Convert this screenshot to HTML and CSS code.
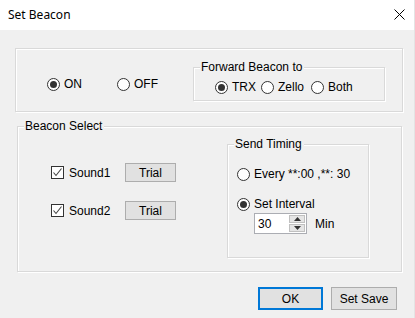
FILE: index.html
```html
<!DOCTYPE html>
<html>
<head>
<meta charset="utf-8">
<link rel="stylesheet" href="styles.css">
</head>
<body>
<div class="window">
  <div class="titlebar">
    <span class="title">Set Beacon</span>
    <svg class="close" width="11" height="11" viewBox="0 0 11 11"><path d="M0.5 0.5 L10.5 10.5 M10.5 0.5 L0.5 10.5" stroke="#000" stroke-width="1" fill="none"/></svg>
  </div>
  <div class="content">
    <div class="group g-power">
      <label class="opt opt-on"><span class="radio checked"></span>ON</label>
      <label class="opt opt-off"><span class="radio"></span>OFF</label>
      <div class="group g-forward">
        <span class="legend">Forward Beacon to</span>
        <label class="opt w-trx"><span class="radio checked"></span>TRX</label>
        <label class="opt w-zello"><span class="radio"></span>Zello</label>
        <label class="opt"><span class="radio"></span>Both</label>
      </div>
    </div>
    <div class="group g-select">
      <span class="legend">Beacon Select</span>
      <div class="sounds">
        <div class="sound-row">
          <span class="check"><svg width="11" height="11" viewBox="0 0 11 11"><path d="M1.5 5.5 L4 8.5 L9.5 1.5" stroke="#444" stroke-width="1.1" fill="none"/></svg></span>
          <span class="sound-name">Sound1</span>
          <button class="btn trial">Trial</button>
        </div>
        <div class="sound-row">
          <span class="check"><svg width="11" height="11" viewBox="0 0 11 11"><path d="M1.5 5.5 L4 8.5 L9.5 1.5" stroke="#444" stroke-width="1.1" fill="none"/></svg></span>
          <span class="sound-name">Sound2</span>
          <button class="btn trial">Trial</button>
        </div>
      </div>
      <div class="group g-timing">
        <span class="legend">Send Timing</span>
        <label class="opt"><span class="radio"></span>Every **:00 ,**: 30</label>
        <label class="opt opt-interval"><span class="radio checked"></span>Set Interval</label>
        <div class="interval-row">
          <div class="spin">
            <span class="spin-value">30</span>
            <span class="spin-btns">
              <span class="spin-btn"><svg width="7" height="4" viewBox="0 0 7 4"><path d="M0 4 L3.5 0 L7 4 Z" fill="#333"/></svg></span>
              <span class="spin-btn"><svg width="7" height="4" viewBox="0 0 7 4"><path d="M0 0 L3.5 4 L7 0 Z" fill="#333"/></svg></span>
            </span>
          </div>
          <span class="unit">Min</span>
        </div>
      </div>
    </div>
    <div class="actions">
      <button class="btn ok">OK</button>
      <button class="btn save">Set Save</button>
    </div>
  </div>
</div>
</body>
</html>
```
FILE: styles.css
```css
* { box-sizing: border-box; }
html, body { margin: 0; padding: 0; }
body {
  width: 415px;
  height: 318px;
  background: #f0f0f0;
  font-family: "Liberation Sans", Arial, sans-serif;
  font-size: 12px;
  color: #000;
  overflow: hidden;
}
.window { width: 415px; height: 318px; display: flex; flex-direction: column; border-right: 1px solid #e4e4e4; }
.titlebar {
  height: 30px;
  background: #fff;
  display: flex;
  align-items: center;
  padding: 0 9px 0 8px;
  flex: none;
}
.title { font-family: "Noto Sans", sans-serif; font-size: 12px; flex: 1; margin-top: -1px; }
.close { display: block; margin-top: -1px; }
.content { flex: 1; display: flex; flex-direction: column; }

.group {
  position: relative;
  border: 1px solid #d9d9d9;
  box-shadow: 1px 1px 0 #fff, inset 1px 1px 0 #fff;
}
.legend {
  position: absolute;
  top: -8px;
  left: 6px;
  padding: 0 2px 0 1px;
  background: #f0f0f0;
  line-height: 14px;
  white-space: nowrap;
}

.opt { display: flex; align-items: center; height: 14px; white-space: nowrap; }
.radio {
  width: 13px; height: 13px; flex: none;
  border: 1px solid #333;
  border-radius: 50%;
  background: #fff;
  margin-right: 4px;
  position: relative;
}
.radio.checked::after {
  content: "";
  position: absolute;
  left: 2px; top: 2px;
  width: 7px; height: 7px;
  border-radius: 50%;
  background: #333;
}

.g-power {
  margin: 18px 0 0 15px;
  width: 388px;
  height: 64px;
  display: flex;
  align-items: flex-start;
  padding: 28px 0 0 31px;
}
.opt-on { width: 70px; }
.g-forward {
  margin: -10px 17px 0 auto;
  width: 192px;
  height: 34px;
  display: flex;
  align-items: flex-start;
  padding: 12px 0 0 21px;
}
.w-trx { width: 46px; }
.w-zello { width: 50px; }

.g-select {
  margin: 14px 0 0 17px;
  width: 385px;
  height: 146px;
  display: flex;
  align-items: flex-start;
}
.sounds {
  display: flex;
  flex-direction: column;
  gap: 19px;
  padding: 36px 0 0 33px;
}
.sound-row { display: flex; align-items: center; height: 19px; }
.check {
  width: 13px; height: 13px; flex: none;
  border: 1px solid #333;
  background: #fff;
  display: flex; align-items: center; justify-content: center;
  margin-right: 5px;
}
.check svg { display: block; }
.sound-name { width: 56px; }
.btn {
  font-family: "Liberation Sans", Arial, sans-serif;
  font-size: 12px;
  color: #000;
  background: #e1e1e1;
  border: 1px solid #adadad;
  padding: 0;
  margin: 0;
  border-radius: 0;
}
.trial { width: 51px; height: 19px; }

.g-timing {
  margin: 17px 0 0 auto;
  margin-right: 32px;
  width: 142px;
  height: 114px;
  padding: 22px 0 0 9px;
  display: flex;
  flex-direction: column;
  align-items: flex-start;
}
.g-timing .opt { margin-bottom: 0; }
.opt-interval { margin-top: 16px; }
.interval-row { display: flex; align-items: center; margin: 2px 0 0 17px; }
.spin {
  width: 53px; height: 21px;
  border: 1px solid #abadb3;
  background: #fff;
  display: flex;
  align-items: center;
  justify-content: space-between;
  padding: 0 1px 0 3px;
}
.spin-btns { display: flex; flex-direction: column; gap: 1px; }
.spin-btn {
  width: 16px; height: 8px;
  background: #e5e5e5;
  border: 1px solid #c0c0c0;
  display: flex; align-items: center; justify-content: center;
}
.spin-btn svg { display: block; }
.unit { margin-left: 8px; }

.actions {
  display: flex;
  justify-content: flex-end;
  gap: 8px;
  margin-top: 15px;
  padding-right: 17px;
}
.actions .btn { height: 23px; }
.ok { width: 65px; border: 2px solid #0078d7; }
.save { width: 66px; }
```
